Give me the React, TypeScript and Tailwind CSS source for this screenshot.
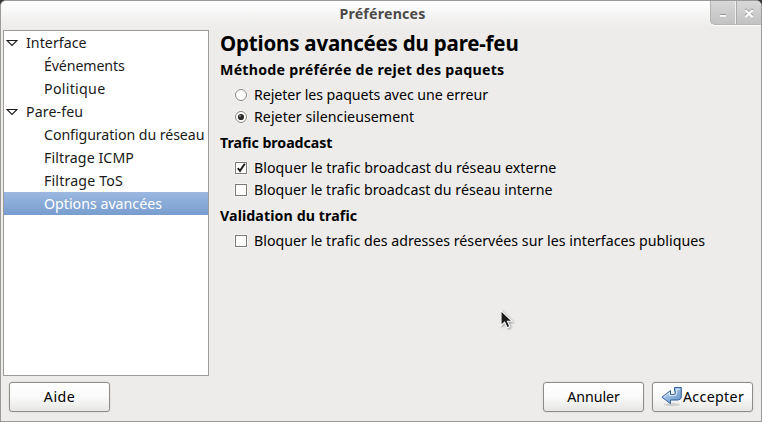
import type { ReactNode } from 'react';

function Arrow() {
  return (
    <svg width="12" height="8" viewBox="0 0 12 8" className="mr-[8px] ml-[2px] shrink-0">
      <path d="M1 1.5H11L6 6.5Z" fill="#fff" stroke="#1a1a1a" strokeWidth="1.1" />
    </svg>
  );
}

function Group({ label, track }: { label: string; track: string }) {
  return (
    <div className="flex h-[23px] items-center">
      <Arrow />
      <span className={track}>{label}</span>
    </div>
  );
}

function Item({ label, track, selected }: { label: string; track: string; selected?: boolean }) {
  return (
    <div
      className={`flex h-[23px] items-center pl-[40px] ${
        selected ? 'bg-linear-to-b from-[#9bb8e1] to-[#779dcd] text-white' : ''
      }`}
    >
      <span className={track}>{label}</span>
    </div>
  );
}

function Heading({ children, className }: { children: ReactNode; className: string }) {
  return <h2 className={`h-[22px] leading-[22px] font-bold ${className}`}>{children}</h2>;
}

function Option({ kind, checked, label, track }: { kind: 'radio' | 'check'; checked?: boolean; label: string; track: string }) {
  return (
    <label className="flex h-[22px] items-center pl-[14px]">
      <svg width="14" height="14" viewBox="0 0 14 14" className="mr-[6px] shrink-0">
        {kind === 'radio' ? (
          <>
            <circle cx="7" cy="7" r="6.6" fill="#f8f8f7" />
            <circle cx="7" cy="7" r="5.5" fill="#fff" stroke="#85827e" />
            {checked && <circle cx="7" cy="7" r="3.1" fill="#2b2b2b" />}
            {checked && <circle cx="6" cy="6" r="0.9" fill="#8a8a8a" />}
          </>
        ) : (
          <>
            <rect x="0.5" y="0.5" width="13" height="13" rx="1" fill="none" stroke="#f6f6f5" />
            <rect x="1.5" y="1.5" width="11" height="11" fill="#fff" stroke="#7d7a76" />
            {checked && <path d="M3.8 7.2L6 9.9L10.8 2.8" fill="none" stroke="#1c1c1c" strokeWidth="1.9" />}
          </>
        )}
      </svg>
      <span className={`pb-[2px] ${track}`}>{label}</span>
    </label>
  );
}

function Button({ children }: { children: ReactNode }) {
  return (
    <button className="flex h-[30px] w-[101px] items-center justify-center rounded-[3px] border border-[#8f8c88] bg-linear-to-b from-white via-[#fafafa] to-[#e7e6e5] shadow-[0_0_0_1px_#e5e4e2]">
      {children}
    </button>
  );
}

function ApplyIcon() {
  return (
    <svg width="22" height="22" viewBox="0 0 22 22" className="shrink-0">
      <defs>
        <linearGradient id="applyFill" x1="0" y1="0" x2="1" y2="1">
          <stop offset="0" stopColor="#c3d8ee" />
          <stop offset="0.55" stopColor="#8db3dc" />
          <stop offset="1" stopColor="#5c8cc4" />
        </linearGradient>
      </defs>
      <ellipse cx="11" cy="18.6" rx="8" ry="1.7" fill="#000" opacity="0.13" />
      <path
        d="M13.5 1.5H20.3V10.5Q20.3 14 16 14H9.5V17.7L0.9 11.2L9.5 4.6V8.4H13Q14.2 8.4 14.2 7.2V5.2H13.5Z"
        fill="url(#applyFill)"
        stroke="#36619a"
      />
      <path d="M2.7 11.2L8.5 6.7V9.6H14Q15.6 9.4 15.6 7.6V3.2H19" fill="none" stroke="#e3eef9" strokeWidth="0.9" />
    </svg>
  );
}

export default function App() {
  return (
    <div className="relative flex h-[422px] w-[762px] flex-col overflow-hidden bg-[#3a3837] font-['Noto_Sans','Open_Sans',sans-serif] text-[14.2px] leading-[19px] text-black">
      <div className="flex h-full flex-col rounded-t-[6px] border border-[#9c9a98] bg-[#edeceb]">
        <header className="flex h-[26px] shrink-0 rounded-t-[5px] bg-linear-to-b from-white to-[#edeceb] pl-[54px]">
          <h1 className="flex-1 pt-[3px] text-center font-bold tracking-[0.2px] text-[#4b4a48]">Préférences</h1>
          <div className="flex h-[24px] w-[51px] rounded-tr-[5px] rounded-bl-[5px] border-b border-l border-[#b5b4b3] bg-linear-to-b from-[#d9d8d8] to-[#c3c2c2] shadow-[0_1px_0_#fff]">
            <div className="flex w-[25px] justify-center border-r border-[#f0f0f0]">
              <svg width="8" height="18" viewBox="0 0 8 18">
                <path d="M1 13.5H7" stroke="#8d8c8b" strokeWidth="1" />
                <path d="M1 14.8H7" stroke="#fff" strokeWidth="1.8" />
              </svg>
            </div>
            <div className="flex w-[25px] justify-center border-l border-[#acabab]">
              <svg width="10" height="20" viewBox="0 0 10 20">
                <path d="M1.4 8L8.6 15M8.6 8L1.4 15" stroke="#8d8c8b" strokeWidth="2.2" />
                <path d="M1.4 9L8.6 16M8.6 9L1.4 16" stroke="#fff" strokeWidth="2.2" />
              </svg>
            </div>
          </div>
        </header>

        <div className="mt-[3px] flex h-[346px] shrink-0 pl-[2px]">
          <nav className="w-[206px] shrink-0 border border-[#9d9b97] bg-white whitespace-nowrap text-[#1a1a1a]">
            <Group label="Interface" track="tracking-[0.05px]" />
            <Item label="Événements" track="tracking-[-0.12px]" />
            <Item label="Politique" track="tracking-[0.3px]" />
            <Group label="Pare-feu" track="tracking-[0.1px]" />
            <Item label="Configuration du réseau" track="tracking-[-0.07px]" />
            <Item label="Filtrage ICMP" track="tracking-[0.08px]" />
            <Item label="Filtrage ToS" track="tracking-[0.17px]" />
            <Item label="Options avancées" track="tracking-[0px]" selected />
          </nav>

          <main className="ml-[11px] flex flex-col whitespace-nowrap">
            <h1 className="-mt-px h-[28px] text-[20.5px] leading-[28px] font-bold tracking-[-0.2px]">
              Options avancées du pare-feu
            </h1>
            <Heading className="mt-[2px] mb-[3px] tracking-[0.25px]">Méthode préférée de rejet des paquets</Heading>
            <Option kind="radio" label="Rejeter les paquets avec une erreur" track="tracking-[-0.06px]" />
            <Option kind="radio" checked label="Rejeter silencieusement" track="tracking-[0.04px]" />
            <Heading className="mt-[4px] mb-[3px] tracking-[-0.05px]">Trafic broadcast</Heading>
            <Option kind="check" checked label="Bloquer le trafic broadcast du réseau externe" track="tracking-[0.04px]" />
            <Option kind="check" label="Bloquer le trafic broadcast du réseau interne" track="tracking-[0.02px]" />
            <Heading className="mt-[4px] mb-[3px] tracking-[0.1px]">Validation du trafic</Heading>
            <Option
              kind="check"
              label="Bloquer le trafic des adresses réservées sur les interfaces publiques"
              track="tracking-[0.02px]"
            />
          </main>
        </div>

        <footer className="mt-[6px] flex gap-[8px] px-[8px]">
          <Button>
            <span className="pb-[2px] tracking-[0.45px]">Aide</span>
          </Button>
          <div className="flex-1" />
          <Button>
            <span className="pb-[2px] tracking-[-0.05px]">Annuler</span>
          </Button>
          <Button>
            <ApplyIcon />
            <span className="pb-[2px] tracking-[0.35px]">Accepter</span>
          </Button>
        </footer>
      </div>

      <svg width="16" height="22" viewBox="0 0 16 22" className="absolute top-[309px] left-[499px] drop-shadow-[1px_1px_1px_rgba(0,0,0,0.35)]">
        <path d="M2 1.5V16.5L5.6 13.2L8.2 18.8L10.9 17.6L8.4 12.2H13Z" fill="#1c1c1c" stroke="#fff" strokeWidth="1.1" />
      </svg>
    </div>
  );
}
